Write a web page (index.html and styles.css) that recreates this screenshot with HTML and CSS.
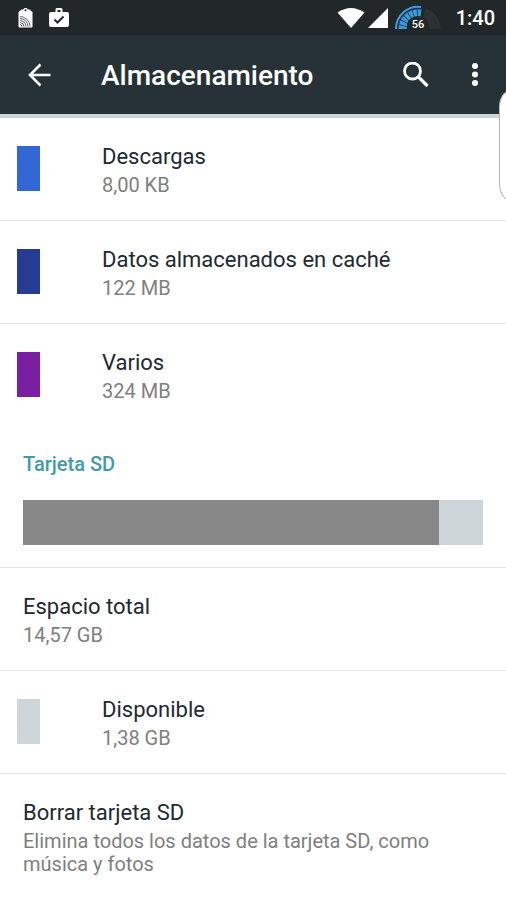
FILE: index.html
```html
<!DOCTYPE html>
<html lang="es">
<head>
<meta charset="utf-8">
<meta name="viewport" content="width=device-width, initial-scale=1">
<title>Almacenamiento</title>
<link rel="stylesheet" href="styles.css">
</head>
<body>
<div class="status">
  <svg class="tag" width="16" height="22" viewBox="0 0 16 22" aria-hidden="true">
    <path fill="#fff" d="M5 2.500L6.500 1h2L10 2.500h1.500L14.500 5v14.500q0 1-1 1h-12q-1 0-1-1V5L3.500 2.500z"/>
    <circle cx="7.500" cy="3.300" r="1" fill="#22272a"/>
    <g fill="none" stroke="#5f6466" stroke-width="1">
      <path d="M2 9.500a10 10 0 0 1 10 10M2 11.500a8 8 0 0 1 8 8M2 13.500a6 6 0 0 1 6 6M2 15.500a4 4 0 0 1 4 4M2 17.500a2 2 0 0 1 2 2"/>
    </g>
  </svg>
  <svg width="20" height="22" viewBox="0 0 20 22" aria-hidden="true">
    <path fill="#fff" fill-rule="evenodd" d="M6.500 5V2.500Q6.500 1 8 1h4q1.500 0 1.500 1.500V5H18q2 0 2 2v11q0 2-2 2H2q-2 0-2-2V7q0-2 2-2zM8.500 5h3V3h-3z"/>
    <path d="M5.500 12.500l3 3 6-6" fill="none" stroke="#22272a" stroke-width="2"/>
  </svg>
  <div class="right">
    <svg width="28" height="22" viewBox="0 0 28 22" aria-hidden="true"><path fill="#fff" d="M0.500 5.500Q14-3.500 27.500 5.500L14 21z"/></svg>
    <svg width="20" height="22" viewBox="0 0 20 22" aria-hidden="true"><path fill="#fff" d="M20 1v20H0z"/></svg>
    <svg class="gauge" width="48" height="26" viewBox="0 0 48 26" role="img" aria-label="56">
      <path d="M30 8.500A16 16 0 0 1 41 24" fill="none" stroke="#2b3236" stroke-width="11"/>
      <path d="M8.500 24A16 16 0 0 1 27 8.500" fill="none" stroke="#1d4a96" stroke-width="9"/>
      <path d="M8.500 24A16 16 0 0 1 27 8.500" fill="none" stroke="#3f9cc4" stroke-width="8" stroke-dasharray="3 1"/>
      <path d="M2 24A22 22 0 0 1 27 2" fill="none" stroke="#3c9fd6" stroke-width="2"/>
      <path d="M4 24A20 20 0 0 1 27 4" fill="none" stroke="#1b3f94" stroke-width="1"/>
      <path d="M13 26V20a11 9 0 0 1 22 0v6z" fill="#22272a"/>
      <text x="24" y="23" class="gauge-text">56</text>
    </svg>
    <span class="clock">1:40</span>
  </div>
</div>
<header class="appbar">
  <button class="icon back" aria-label="Atrás"><svg width="24" height="24" viewBox="0 0 24 24"><path d="M12.500 1.500L2 12l10.500 10.500M2 12h20.500" fill="none" stroke="#fff" stroke-width="2.600"/></svg></button>
  <h1>Almacenamiento</h1>
  <button class="icon search" aria-label="Buscar"><svg width="26" height="26" viewBox="0 0 26 26"><circle cx="9.500" cy="9" r="8" fill="none" stroke="#fff" stroke-width="2.800"/><path d="M15.500 15l9 9" stroke="#fff" stroke-width="3.200"/></svg></button>
  <button class="icon" aria-label="Más opciones"><svg width="8" height="24" viewBox="0 0 8 24"><g fill="#fff"><circle cx="4" cy="3" r="3"/><circle cx="4" cy="11.500" r="3"/><circle cx="4" cy="20" r="3"/></g></svg></button>
</header>
<div class="edge"></div>
<main>
  <section>
    <div class="row"><div class="lead"><i class="swatch blue"></i></div><div><h2>Descargas</h2><p>8,00 KB</p></div></div>
    <div class="row"><div class="lead"><i class="swatch navy"></i></div><div><h2>Datos almacenados en caché</h2><p>122 MB</p></div></div>
    <div class="row"><div class="lead"><i class="swatch purple"></i></div><div><h2>Varios</h2><p>324 MB</p></div></div>
  </section>
  <section>
    <h3>Tarjeta SD</h3>
    <div class="usage"><div class="used" style="width:90.5%"></div></div>
    <div class="row"><div><h2>Espacio total</h2><p>14,57 GB</p></div></div>
    <div class="row"><div class="lead"><i class="swatch free"></i></div><div><h2>Disponible</h2><p>1,38 GB</p></div></div>
    <div class="row"><div><h2>Borrar tarjeta SD</h2><p>Elimina todos los datos de la tarjeta SD, como música y fotos</p></div></div>
  </section>
</main>
</body>
</html>
```
FILE: styles.css
```css
* { box-sizing: border-box; }

body {
  margin: 0;
  position: relative;
  overflow-x: hidden;
  background: #fff;
  color: #202a30;
  font-family: Roboto, "Liberation Sans", sans-serif;
}

h1, h2, h3, p { margin: 0; font-weight: 400; }
svg { display: block; flex: none; }

.status {
  display: flex;
  align-items: center;
  gap: 15px;
  height: 35px;
  padding: 0 11px 0 18px;
  background: #22272a;
}

.right {
  display: flex;
  align-items: center;
  gap: 3px;
  margin-left: auto;
  color: #fff;
}

.gauge { margin-left: 3px; }
.gauge-text { fill: #fff; font-size: 11px; font-weight: 500; text-anchor: middle; }
.clock { margin-left: 11px; font-size: 20px; line-height: 24px; font-weight: 500; }

.appbar {
  display: flex;
  align-items: center;
  height: 79px;
  padding: 0 27px 0 28px;
  background: #263238;
  color: #fff;
}

.appbar h1 {
  flex: 1;
  padding-top: 3px;
  font-size: 28px;
  line-height: 32px;
  font-weight: 500;
}

.icon { padding: 0; border: 0; background: none; }
.back { margin-right: 49px; }
.search { margin-right: 42px; }

.edge {
  position: absolute;
  top: 91px;
  right: -13px;
  width: 20px;
  height: 109px;
  border: 1px solid #b4b8ba;
  border-radius: 10px / 16px;
  background: #fff;
}

main { border-top: 4px solid #cfd4d6; }

.row {
  display: flex;
  min-height: 103px;
  padding: 22px 23px 23px;
  border-top: 1px solid #e1e4e5;
}

section:first-child .row:first-child { border-top: 0; min-height: 102px; }

.lead {
  display: flex;
  align-items: center;
  width: 85px;
  margin-left: -6px;
}

.swatch { width: 23px; height: 45px; }
.blue { background: #3367d6; }
.navy { background: #253c92; }
.purple { background: #7b1fa2; }
.free { background: #cfd6d9; }

h2 { font-size: 22px; line-height: 34px; }
p { color: #808080; font-size: 20px; line-height: 23px; }

h3 {
  padding: 26px 23px 24px;
  color: #3f9aac;
  font-size: 20px;
  line-height: 24px;
  font-weight: 500;
}

.usage {
  height: 45px;
  margin: 0 23px 22px;
  background: #cfd6d9;
}

.used { height: 100%; background: #888; }
```
